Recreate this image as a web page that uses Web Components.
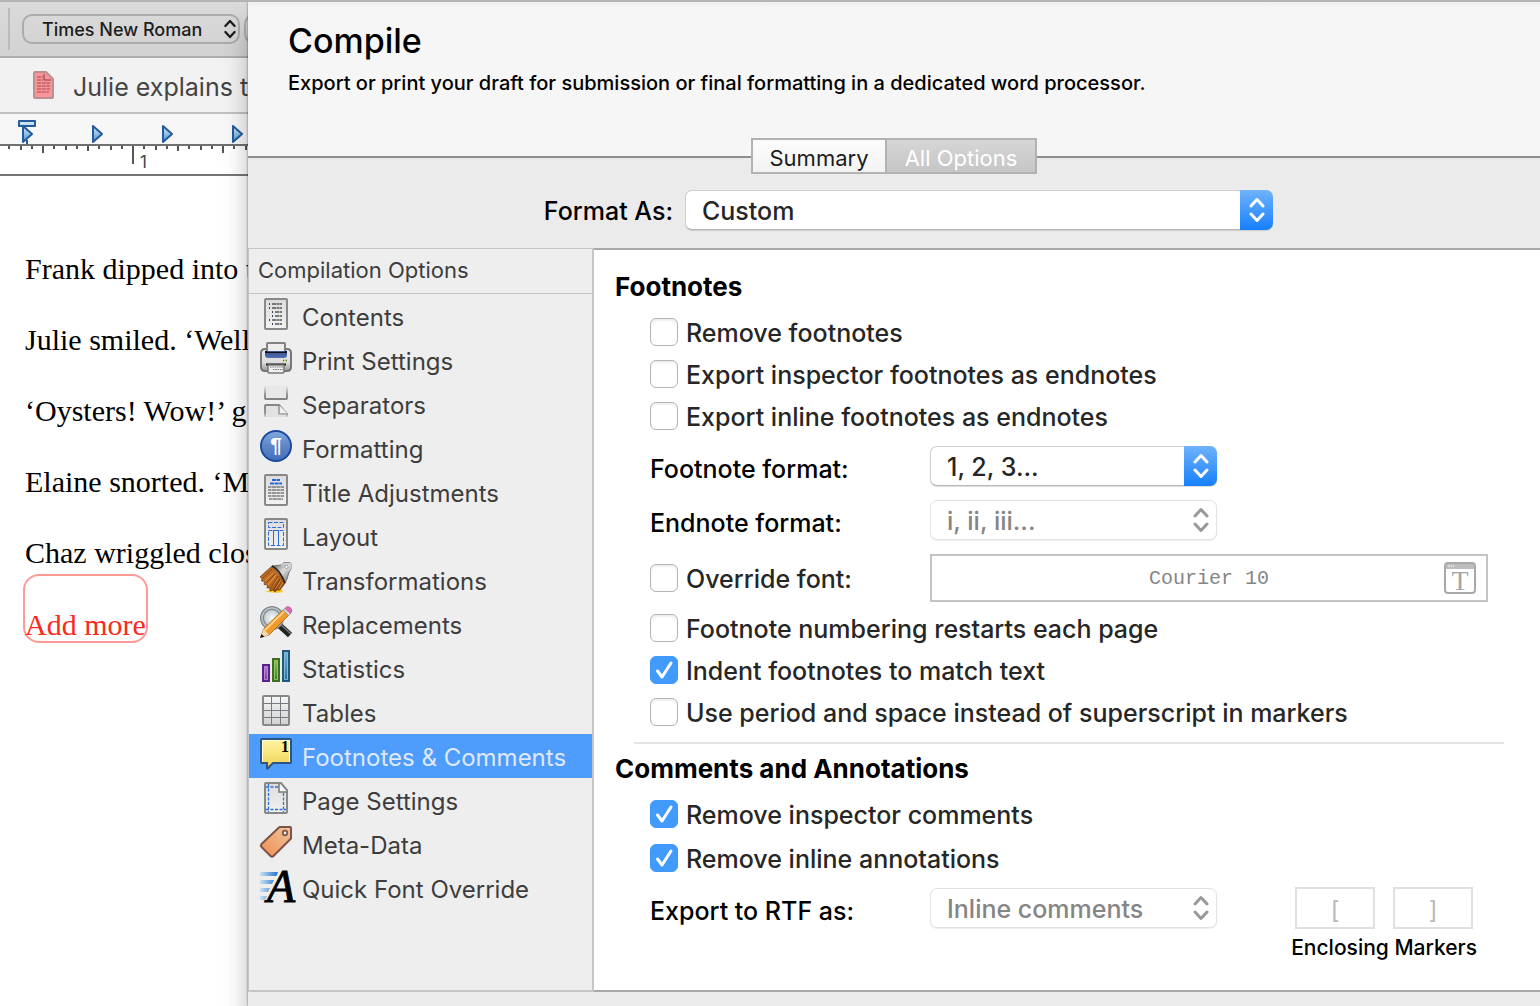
<!DOCTYPE html>
<html lang="en">
<head>
<meta charset="utf-8">
<title>Compile</title>
<style>
html, body{
    height: 100%;
}
body{
    margin: 0;
    display: grid;
    grid-template-columns: 248px minmax(0, 1fr);
    border-top: 2px solid #b4b4b4;
    box-sizing: border-box;
    overflow: hidden;
    background-color: #fff;
    font-family: Inter, "Liberation Sans", sans-serif;
    font-size: 25px;
    color: #000;
}
</style>
</head>
<body>
<editor-window></editor-window>
<compile-dialog></compile-dialog>

<script>
const chevrons = `
<svg class="chevrons" width="16" height="26" viewBox="0 0 16 26" fill="none" stroke="currentColor" stroke-width="3" stroke-linecap="round" stroke-linejoin="round" aria-hidden="true">
    <path d="M2 9 8 2.500 14 9M2 17l6 6.500 6-6.500"/>
</svg>`

// gradients shared by the page shaped icons
const pageDefs = `
<defs>
    <linearGradient id="paper" x1="0" y1="0" x2="0" y2="1">
        <stop offset="0" stop-color="#dcdcdc"/><stop offset="1" stop-color="#f2f2f2"/>
    </linearGradient>
</defs>`
const sheet = `${pageDefs}<rect x="5" y="1" width="22" height="30" rx="1" fill="url(#paper)" stroke="#888" stroke-width="2"/>`

const icons = {
    contents: `${sheet}
        <g stroke="#2c4460" stroke-width="2"><path d="M9 6h1M9 10h1M12 14h1M12 18h1M9 22h1M12 26h1"/></g>
        <g stroke="#555" stroke-width="1.3" stroke-dasharray="4 .5 3 .4"><path d="M12 6h10M12 10h10M15 14h7M15 18h7M12 22h10M15 26h7"/></g>`,
    print: `
        <defs>
            <linearGradient id="body" x1="0" y1="0" x2="0" y2="1"><stop offset="0" stop-color="#e8e8e8"/><stop offset=".6" stop-color="#dedede"/><stop offset="1" stop-color="#999"/></linearGradient>
            <linearGradient id="slot" x1="0" y1="0" x2="0" y2="1"><stop offset="0" stop-color="#3a4f88"/><stop offset="1" stop-color="#5070b4"/></linearGradient>
        </defs>
        <path d="M5 7h22q4 0 4 4v14q0 4-4 4H5q-4 0-4-4V11q0-4 4-4z" fill="url(#body)" stroke="#777" stroke-width="2"/>
        <path d="M7 10V2q0-1 1-1h16q1 0 1 1v8z" fill="#ededed" stroke="#828282" stroke-width="2"/>
        <path d="M5 9h22v4q0 3-3 3H8q-3 0-3-3z" fill="url(#slot)"/>
        <path d="M5 9h2v1h18V9h2v2H5z" fill="#0d1120"/>
        <path d="M23 18.500h1.300" stroke="#e22" stroke-width="1.500"/><path d="M24.300 18.500h1.300" stroke="#fc3" stroke-width="1.500"/><path d="M25.600 18.500h1.400" stroke="#3a3" stroke-width="1.500"/>
        <path d="M6 22.500h20" stroke="#111" stroke-width="2"/>
        <path d="M8 23h16v7q0 1-1 1H9q-1 0-1-1z" fill="#f1f1f1" stroke="#777" stroke-width="1.500"/>
        <path d="M10 25h13M13 27.500h10" stroke="#777" stroke-width="1" stroke-dasharray="1.500 .8"/>`,
    separators: `
        <defs>
            <linearGradient id="up" x1="0" y1="0" x2="0" y2="16" gradientUnits="userSpaceOnUse"><stop offset="0" stop-color="#999" stop-opacity="0"/><stop offset=".5" stop-color="#999"/><stop offset="1" stop-color="#777"/></linearGradient>
            <linearGradient id="down" x1="0" y1="17" x2="0" y2="32" gradientUnits="userSpaceOnUse"><stop offset="0" stop-color="#808080"/><stop offset=".7" stop-color="#999"/><stop offset="1" stop-color="#999" stop-opacity="0"/></linearGradient>
        </defs>
        <path d="M5 0v12q0 1 1 1h20q1 0 1-1V0" fill="#e8e8e8" stroke="url(#up)" stroke-width="2"/>
        <path d="M5 31V20q0-1 1-1h13l8 9v3" fill="#e2e2e2" stroke="url(#down)" stroke-width="2"/>
        <path d="M19 19v9h9" fill="#f0f0f0" stroke="url(#down)" stroke-width="1.500"/>`,
    formatting: `
        <defs><linearGradient id="blue" x1="0" y1="0" x2="0" y2="1"><stop offset="0" stop-color="#83aade"/><stop offset=".5" stop-color="#5e85c6"/><stop offset="1" stop-color="#426fba"/></linearGradient></defs>
        <circle cx="16" cy="16" r="15" fill="url(#blue)" stroke="#1c4a9e" stroke-width="2"/>
        <text x="16" y="22" text-anchor="middle" font-family="Liberation Sans" font-weight="700" font-size="21" fill="#fff">¶</text>`,
    title: `${sheet}
        <path d="M12 6h8M10 9.500h12" stroke="#2166d8" stroke-width="2" stroke-dasharray="4 .6"/>
        <path d="M8 13h16M8 16h16M8 19h16M8 22h16M9 25h14" stroke="#444" stroke-width="1.200" stroke-dasharray="3 .5 5 .4"/>`,
    layout: `${sheet}
        <g fill="none" stroke="#2f6dd6"><path d="M8.500 4.500h15v5h-15zM8.500 12.500h15v15h-15z" stroke-dasharray="4 1.500"/><path d="M13.500 12v16M18.500 12v16"/></g>`,
    transform: `
        <defs>
            <linearGradient id="metal" x1="0" y1="0" x2="1" y2="1"><stop offset="0" stop-color="#555"/><stop offset=".5" stop-color="#ddd"/><stop offset="1" stop-color="#666"/></linearGradient>
            <linearGradient id="hair" x1="0" y1="0" x2="1" y2="1"><stop offset="0" stop-color="#b4661c"/><stop offset=".5" stop-color="#c07026"/><stop offset="1" stop-color="#6a3008"/></linearGradient>
        </defs>
        <path d="M3 29q6 1 8-3l12 2q-2 2 1 2-10 2-21-1z" fill="#f9c518"/>
        <path d="M12 4 2 13 0 15l2 1-.5 3 3 .5-.5 3 3.500.500L7 26l3 0 0 3 3-1 2 2 2-2 3 0 6-8z" fill="url(#hair)" stroke="#5b2a08" stroke-width=".6"/>
        <path d="M11 8 4 15M13 11l-8 8M16 13l-8 10M18 16l-7 10M21 18l-6 9M23 20l-4 7" stroke="#e69a3c" stroke-width="1"/>
        <path d="M12 7 3 16M15 12l-9 9M18 14l-7 12M20 17l-6 11" stroke="#5b1e05" stroke-width=".6"/>
        <path d="M12 4q8 4 13 17l2-4 2-7 2-3V2q0-1.500-1.500-1.500H24L21 3z" fill="url(#metal)" stroke="#777" stroke-width="1"/>
        <path d="M21 3.500 24 1.500h5.500q1 0 1 1V6L28 9" stroke="#d2d2d2" stroke-width="1.500"/>
        <path d="M12 4q8 4 13 17" stroke="#222" stroke-width="1.500"/>
        <circle cx="26.500" cy="5" r="1.500" fill="#fff" stroke="#888" stroke-width=".7"/>`,
    replace: `
        <defs><radialGradient id="lens"><stop offset="0" stop-color="#f7fafb"/><stop offset="1" stop-color="#b7c3ca"/></radialGradient></defs>
        <path d="m19 19 11 10" stroke="#222" stroke-width="6"/>
        <path d="m20 18 11 10" stroke="#777" stroke-width="1.500"/>
        <circle cx="12" cy="12" r="10" fill="url(#lens)" stroke="#7f878b" stroke-width="4"/>
        <circle cx="12" cy="12" r="10" stroke="#b9c2c6" stroke-width="1.500"/>
        <path d="m1 31 2.500-8L23 4l5.500 5.500L9 29z" fill="#f09a2e" stroke="#a85f14" stroke-width=".8"/>
        <path d="M5 24 24 5.500" stroke="#ffd07c" stroke-width="2"/>
        <path d="m1 31 2.500-8L9 29z" fill="#f3dcb4"/><path d="m0 32 1.500-4 2.800 2.700z" fill="#111"/>
        <path d="m23 4 2-1.800 5.500 5.500-2 1.800z" fill="#d8d8d8" stroke="#888" stroke-width=".7"/>
        <path d="m25 2.200 1-1q2-1.500 4.300.4 2.600 2.400 1 5l-.8 1z" fill="#d96bb9" stroke="#b74a96" stroke-width=".6"/>`,
    stats: `
        <defs>
            <linearGradient id="p" x2="0" y2="1"><stop offset="0" stop-color="#bd7ad4"/><stop offset="1" stop-color="#7e36a4"/></linearGradient>
            <linearGradient id="g" x2="0" y2="1"><stop offset="0" stop-color="#8cc152"/><stop offset="1" stop-color="#3d8224"/></linearGradient>
            <linearGradient id="b" x2="0" y2="1"><stop offset="0" stop-color="#72b6cf"/><stop offset="1" stop-color="#2e6ea6"/></linearGradient>
        </defs>
        <path d="M2 14h8v18H2z" fill="#57228a"/><path d="M4.500 16.500h3v13h-3z" fill="url(#p)" stroke="#b988d2"/>
        <path d="M12 8h8v24h-8z" fill="#3c701e"/><path d="M14.500 10.500h3v19h-3z" fill="url(#g)" stroke="#93c46c"/>
        <path d="M22 0h8v32h-8z" fill="#20597e"/><path d="M24.500 2.500h3v27h-3z" fill="url(#b)" stroke="#82bbd9"/>`,
    tables: `
        <defs><linearGradient id="cell" x2="0" y2="1"><stop offset="0" stop-color="#f5f5f5"/><stop offset="1" stop-color="#d2d2d2"/></linearGradient></defs>
        <rect x="3" y="2" width="26" height="29" rx="1" fill="url(#cell)" stroke="#888" stroke-width="2"/>
        <path d="M11.500 2v29M20.500 2v29M3 9.500h26M3 16.500h26M3 23.500h26" stroke="#747b85"/>`,
    comments: `
        <defs><linearGradient id="note" x2="0" y2="1"><stop offset="0" stop-color="#fff4a4"/><stop offset=".5" stop-color="#f7e67b"/><stop offset="1" stop-color="#f0cc52"/></linearGradient></defs>
        <path d="M2 1h28q1 0 1 1v22q0 1-1 1H13l-5.500 5.500Q7 31 7 30v-5H2q-1 0-1-1V2q0-1 1-1z" fill="url(#note)" stroke="#2b5583" stroke-width="2"/>
        <path d="M2.500 24V2.500h27V24" stroke="#fffbd2"/>
        <text x="25" y="14" text-anchor="middle" font-family="Liberation Serif" font-weight="700" font-size="16" fill="#000">1</text>`,
    page: `${pageDefs}
        <path d="M6 1h15l6 7v22q0 1-1 1H6q-1 0-1-1V2q0-1 1-1z" fill="url(#paper)" stroke="#888" stroke-width="2"/>
        <path d="M8.500 2v28M23.500 11v19M6 5h13M6 27.500h20" stroke="#2f6dd6" stroke-width="1.300" stroke-dasharray="3 1.500"/>
        <path d="M19 1v9h8" fill="#fafafa" stroke="#777" stroke-width="1.500"/>`,
    tag: `
        <defs><linearGradient id="tag" x1="1" y1="0" x2="0" y2="1"><stop offset="0" stop-color="#efc4a0"/><stop offset="1" stop-color="#f08e4e"/></linearGradient></defs>
        <path d="M19.500 1H30q1 0 1 1v10.500L13.500 30q-1.500 1.500-3 0L1.500 21q-1.200-1.500 0-3z" fill="url(#tag)" stroke="#7d5348" stroke-width="2" stroke-linejoin="round"/>
        <circle cx="25" cy="7" r="2.300" fill="#f3ece7" stroke="#7d5348" stroke-width="1.700"/>`,
    font: `
        <defs><linearGradient id="speed"><stop offset="0" stop-color="#c8e1f4"/><stop offset="1" stop-color="#2372ce"/></linearGradient></defs>
        <path d="M0 2h18l-1.500 4H0zM0 10h14l-2 4H0zM0 18h10l-2 4H0zM0 26h7l-2 4H0z" fill="url(#speed)"/>
        <text x="7" y="32" font-family="Liberation Serif" font-style="italic" font-size="46" fill="#000" stroke="#000">A</text>`
}

class FontPicker extends HTMLElement{
    constructor(){
        super()
        this._shadowDom = this.attachShadow({mode: 'open'})
    }
    connectedCallback(){
        this._shadowDom.innerHTML = `
        <style>
        :host{
            display: grid;
            grid-template-columns: 218px;
            align-items: center;
            color: #1d1d1d;
        }
        select, .chevrons{
            grid-area: 1 / 1;
        }
        select{
            appearance: none;
            height: 30px;
            padding: 0 18px;
            border: 2px solid #ababab;
            border-radius: 10px;
            background-color: transparent;
            font: 500 18px Inter, sans-serif;
            color: inherit;
        }
        .chevrons{
            justify-self: end;
            width: 14px;
            height: 20px;
            margin-right: 3px;
            pointer-events: none;
        }
        </style>
        <select aria-label="Font family"><option>Times New Roman</option></select>
        ${chevrons}
        `
    }
}

class TabRuler extends HTMLElement{
    constructor(){
        super()
        this._shadowDom = this.attachShadow({mode: 'open'})
    }
    connectedCallback(){
        let ticks = ''
        // sixteenths of an inch, 180px to the inch
        for(let i = -11; i <= 10; i++){
            const x = Math.round(133 + i * 11.25)
            let h = 3
            if(i % 2 === 0) h = 4
            if(i % 4 === 0) h = 5
            if(i % 8 === 0) h = 7
            if(i % 16 === 0) h = 18
            ticks += `<path d="M${x} 32v${h}"/>`
        }
        const stops = [22, 92, 162, 232].map(x => `<path d="M${x + 1} 12v16l9-8z"/>`).join('')
        this._shadowDom.innerHTML = `
        <style>
        :host{
            display: grid;
            height: 60px;
            border-bottom: 2px solid #767676;
            background: linear-gradient(#f7f7f7 30px, #707070 30px, #707070 32px, #fff 32px);
        }
        svg, span{
            grid-area: 1 / 1;
        }
        span{
            padding: 37px 0 0 140px;
            font-size: 17px;
            line-height: 22px;
            color: #444;
        }
        </style>
        <svg width="248" height="60" viewBox="0 0 248 60" aria-hidden="true">
            <defs><linearGradient id="stop" x2="0" y2="1"><stop offset="0" stop-color="#d5e8f7"/><stop offset="1" stop-color="#4f95d6"/></linearGradient></defs>
            <g stroke="#555" stroke-width="2">${ticks}</g>
            <g fill="url(#stop)" stroke="#245b9b" stroke-width="2" stroke-linejoin="round">
                <path d="M19 7h16v5H19zM27 26v4"/>
                ${stops}
            </g>
        </svg>
        <span>1</span>
        `
    }
}

class EditorWindow extends HTMLElement{
    constructor(){
        super()
        this._shadowDom = this.attachShadow({mode: 'open'})
    }
    connectedCallback(){
        this._shadowDom.innerHTML = `
        <style>
        :host{
            display: flex;
            flex-direction: column;
            min-width: 0;
            overflow: hidden;
            white-space: nowrap;
            background-color: #fff;
        }
        .toolbar{
            display: flex;
            align-items: center;
            height: 54px;
            padding-left: 8px;
            border-bottom: 2px solid #aeaeae;
            background: linear-gradient(#dadadb, #d2d2d3);
        }
        .divider{
            flex: none;
            width: 2px;
            height: 42px;
            margin-right: 12px;
            background-color: #bbb;
        }
        .next{
            flex: none;
            width: 60px;
            height: 26px;
            margin-left: 4px;
            border: 2px solid #ababab;
            border-radius: 10px;
        }
        .document{
            display: flex;
            align-items: center;
            gap: 18px;
            height: 54px;
            padding-left: 33px;
            border-bottom: 2px solid #bdc1c4;
            background-color: #f2f2f2;
            color: #444;
        }
        .document svg{
            flex: none;
        }
        .document span{
            padding-top: 3px;
        }
        .draft{
            padding: 57px 0 0 25px;
            font-family: "Liberation Serif", serif;
            font-size: 30px;
            line-height: 71px;
        }
        p{
            margin: 0;
        }
        .annotation{
            width: fit-content;
            margin: -14px 0 0 -2px;
            padding: 33px 0 0;
            border: 2px solid #ff9a96;
            border-radius: 16px;
            line-height: 32px;
            color: #fc2a1c;
        }
        </style>
        <div class="toolbar">
            <div class="divider"></div>
            <font-picker></font-picker>
            <div class="next"></div>
        </div>
        <div class="document">
            <svg width="22" height="28" viewBox="0 0 22 28" fill="none" aria-hidden="true">
                <path d="M2 1h11l7 7v18q0 1-1 1H2q-1 0-1-1V2q0-1 1-1z" fill="#f7959a" stroke="#bd8f90" stroke-width="2"/>
                <path d="M11 3v6h7" stroke="#8a3c40"/>
                <path d="M4 6h6M4 9h6M4 12h13M4 15h13M4 18h13M4 21h12" stroke="#a8484e" stroke-dasharray="4 .7"/>
            </svg>
            <span>Julie explains t</span>
        </div>
        <tab-ruler></tab-ruler>
        <div class="draft">
            <p>Frank dipped into t</p>
            <p>Julie smiled. ‘Well</p>
            <p>‘Oysters! Wow!’ g</p>
            <p>Elaine snorted. ‘M</p>
            <p>Chaz wriggled clos</p>
            <p class="annotation">Add more</p>
        </div>
        `
    }
}

class OptionItem extends HTMLElement{
    constructor(){
        super()
        this._shadowDom = this.attachShadow({mode: 'open'})
    }
    connectedCallback(){
        this._shadowDom.innerHTML = `
        <style>
        :host{
            display: block;
        }
        a{
            display: flex;
            align-items: center;
            gap: 10px;
            height: 44px;
            padding-left: 11px;
            color: #3d3d3d;
            text-decoration: none;
            white-space: nowrap;
        }
        :host([selected]) a{
            background-color: #4e9cfb;
            color: #dfe8fc;
        }
        svg{
            flex: none;
            margin-bottom: 4px;
            overflow: visible;
        }
        span{
            padding-top: 3px;
        }
        </style>
        <a href="#${this.getAttribute('icon')}">
            <svg width="32" height="32" viewBox="0 0 32 32" fill="none" aria-hidden="true">${icons[this.getAttribute('icon')]}</svg>
            <span><slot></slot></span>
        </a>
        `
    }
}

class OptionList extends HTMLElement{
    constructor(){
        super()
        this._shadowDom = this.attachShadow({mode: 'open'})
    }
    connectedCallback(){
        this._shadowDom.innerHTML = `
        <style>
        :host{
            display: block;
            border: solid #c5c5c5;
            border-width: 1px 2px 2px 1px;
            background-color: #eee;
            font-size: 24px;
        }
        h2{
            margin: 0;
            padding: 0 0 2px 9px;
            border-bottom: 1px solid #c5c5c5;
            font-size: 22px;
            font-weight: 400;
            line-height: 42px;
            color: #3d3d3d;
        }
        </style>
        <h2>Compilation Options</h2>
        <nav>
            <option-item icon="contents">Contents</option-item>
            <option-item icon="print">Print Settings</option-item>
            <option-item icon="separators">Separators</option-item>
            <option-item icon="formatting">Formatting</option-item>
            <option-item icon="title">Title Adjustments</option-item>
            <option-item icon="layout">Layout</option-item>
            <option-item icon="transform">Transformations</option-item>
            <option-item icon="replace">Replacements</option-item>
            <option-item icon="stats">Statistics</option-item>
            <option-item icon="tables">Tables</option-item>
            <option-item icon="comments" selected>Footnotes &amp; Comments</option-item>
            <option-item icon="page">Page Settings</option-item>
            <option-item icon="tag">Meta-Data</option-item>
            <option-item icon="font">Quick Font Override</option-item>
        </nav>
        `
    }
}

class CheckOption extends HTMLElement{
    constructor(){
        super()
        this._shadowDom = this.attachShadow({mode: 'open'})
    }
    connectedCallback(){
        this._shadowDom.innerHTML = `
        <style>
        :host{
            display: block;
            color: #262626;
        }
        label{
            display: grid;
            grid-template-columns: 28px 1fr;
            column-gap: 8px;
            align-items: center;
            height: 42px;
            white-space: nowrap;
        }
        input, svg{
            grid-area: 1 / 1;
        }
        input{
            appearance: none;
            box-sizing: border-box;
            width: 28px;
            height: 28px;
            margin: 0;
            border: 1px solid #b4b4b4;
            border-radius: 6px;
            background-color: #fff;
            box-shadow: inset 0 2px 2px #eee;
        }
        input:checked{
            border-color: #3f99f8;
            background-color: #409bfc;
            box-shadow: none;
        }
        svg{
            display: none;
            pointer-events: none;
        }
        input:checked + svg{
            display: block;
        }
        span{
            padding-top: 2px;
        }
        </style>
        <label>
            <input type="checkbox" ${this.hasAttribute('checked') ? 'checked' : ''}>
            <svg width="28" height="28" viewBox="0 0 28 28" fill="none" stroke="#fff" stroke-width="3" stroke-linecap="round" stroke-linejoin="round" aria-hidden="true"><path d="m7.500 15 4.500 6 9-14"/></svg>
            <span><slot></slot></span>
        </label>
        `
    }
}

class PopUp extends HTMLElement{
    constructor(){
        super()
        this._shadowDom = this.attachShadow({mode: 'open'})
    }
    connectedCallback(){
        const disabled = this.hasAttribute('disabled') ? 'disabled' : ''
        this._shadowDom.innerHTML = `
        <style>
        :host{
            display: grid;
            grid-template-columns: var(--label-width, 280px) minmax(0, var(--control-width, 287px));
            align-items: center;
            height: 54px;
        }
        label{
            padding: var(--label-padding, 5px 0 0);
            text-align: var(--label-align, left);
            white-space: nowrap;
        }
        .control{
            display: grid;
            align-items: center;
        }
        select, .cap{
            grid-area: 1 / 1;
        }
        select{
            appearance: none;
            box-sizing: border-box;
            width: 100%;
            height: 40px;
            padding: 1px 16px 0;
            border: 1px solid #cfcfcf;
            border-bottom-color: #b5b5b5;
            border-radius: 7px;
            background-color: #fff;
            box-shadow: 0 1px 1px #0002;
            font: inherit;
            color: #262626;
            opacity: 1;
        }
        .cap{
            justify-self: end;
            display: grid;
            place-items: center;
            width: 33px;
            height: 40px;
            border-radius: 0 7px 7px 0;
            background: linear-gradient(#6fb3fb, #1780fd);
            color: #fff;
            pointer-events: none;
        }
        select:disabled{
            border-color: #e2e2e2;
            box-shadow: 0 1px 1px #0001;
            color: #858585;
        }
        select:disabled + .cap{
            background: none;
            color: #999;
        }
        </style>
        <label for="choice">${this.getAttribute('label')}</label>
        <div class="control">
            <select id="choice" ${disabled}><option>${this.getAttribute('value')}</option></select>
            <div class="cap">${chevrons}</div>
        </div>
        `
    }
}

class FontWell extends HTMLElement{
    constructor(){
        super()
        this._shadowDom = this.attachShadow({mode: 'open'})
    }
    connectedCallback(){
        this._shadowDom.innerHTML = `
        <style>
        :host{
            display: grid;
            grid-template-columns: 1fr 42px;
            align-items: center;
            box-sizing: border-box;
            height: 48px;
            border: 2px solid #c3c3c3;
        }
        span{
            grid-area: 1 / 1 / 2 / 3;
            text-align: center;
            font-family: "Liberation Mono", monospace;
            font-size: 20px;
            font-weight: 400;
            color: #858585;
        }
        button{
            grid-area: 1 / 2;
            padding: 0;
            border: none;
            background: none;
            text-align: left;
        }
        svg{
            display: block;
        }
        </style>
        <span>Courier 10</span>
        <button disabled aria-label="Choose font">
            <svg width="32" height="32" viewBox="0 0 32 32" fill="none" aria-hidden="true">
                <rect x="1" y="1" width="30" height="30" rx="3" fill="#fff" stroke="#a9a9a9" stroke-width="2"/>
                <path d="M2 2h28v5H2z" fill="#bdbdbd"/>
                <path d="M4 4h6" stroke="#eee" stroke-width="1.500" stroke-dasharray="1.500 1"/>
                <text x="16" y="28" text-anchor="middle" font-family="Liberation Serif" font-weight="400" font-size="28" fill="#a6a6a6">T</text>
            </svg>
        </button>
        `
    }
}

class EnclosingMarkers extends HTMLElement{
    constructor(){
        super()
        this._shadowDom = this.attachShadow({mode: 'open'})
    }
    connectedCallback(){
        this._shadowDom.innerHTML = `
        <style>
        :host{
            display: block;
            font-size: 21px;
        }
        div{
            display: flex;
            gap: 18px;
            justify-content: center;
        }
        input{
            box-sizing: border-box;
            width: 80px;
            height: 42px;
            padding: 4px 0 0;
            border: 2px solid #e0e0e0;
            border-radius: 0;
            background-color: #fff;
            font: 24px Inter, sans-serif;
            text-align: center;
            color: #b9b9b9;
        }
        label{
            display: block;
            margin-top: 5px;
            line-height: 28px;
            text-align: center;
            white-space: nowrap;
        }
        </style>
        <div>
            <input id="open" value="[" disabled>
            <input value="]" aria-label="Closing marker" disabled>
        </div>
        <label for="open">Enclosing Markers</label>
        `
    }
}

class FootnotesPanel extends HTMLElement{
    constructor(){
        super()
        this._shadowDom = this.attachShadow({mode: 'open'})
    }
    connectedCallback(){
        this._shadowDom.innerHTML = `
        <style>
        :host{
            display: block;
            min-width: 0;
            padding: 16px 36px 0 21px;
            border: solid #a9a9a9;
            border-width: 2px 0;
            background-color: #fff;
            font-weight: 500;
        }
        h3{
            margin: 0 0 3px;
            font-size: 26px;
            font-weight: 700;
            line-height: 42px;
        }
        section{
            padding-left: 35px;
        }
        .formats{
            padding: 2px 0;
        }
        .override{
            display: grid;
            grid-template-columns: 280px minmax(0, 558px);
            align-items: center;
            height: 54px;
            margin-top: 4px;
        }
        hr{
            height: 2px;
            margin: 9px 0 4px 19px;
            border: none;
            background-color: #e4e4e4;
        }
        .comments{
            display: grid;
            row-gap: 2px;
        }
        .export{
            display: flex;
            justify-content: space-between;
            padding-right: 27px;
        }
        enclosing-markers{
            margin-top: 6px;
        }
        </style>
        <h3>Footnotes</h3>
        <section>
            <check-option>Remove footnotes</check-option>
            <check-option>Export inspector footnotes as endnotes</check-option>
            <check-option>Export inline footnotes as endnotes</check-option>
            <div class="formats">
                <pop-up label="Footnote format:" value="1, 2, 3..."></pop-up>
                <pop-up label="Endnote format:" value="i, ii, iii..." disabled></pop-up>
                <div class="override">
                    <check-option>Override font:</check-option>
                    <font-well></font-well>
                </div>
            </div>
            <check-option>Footnote numbering restarts each page</check-option>
            <check-option checked>Indent footnotes to match text</check-option>
            <check-option>Use period and space instead of superscript in markers</check-option>
        </section>
        <hr>
        <h3>Comments and Annotations</h3>
        <section class="comments">
            <check-option checked>Remove inspector comments</check-option>
            <check-option checked>Remove inline annotations</check-option>
            <div class="export">
                <pop-up label="Export to RTF as:" value="Inline comments" disabled></pop-up>
                <enclosing-markers></enclosing-markers>
            </div>
        </section>
        `
    }
}

class ViewTabs extends HTMLElement{
    constructor(){
        super()
        this._shadowDom = this.attachShadow({mode: 'open'})
    }
    connectedCallback(){
        this._shadowDom.innerHTML = `
        <style>
        :host{
            display: grid;
            grid-template-columns: 1fr 134px 152px 1fr;
            align-items: center;
            background: linear-gradient(#f6f6f6 50%, #ebebeb 50%);
        }
        :host::before, :host::after{
            content: "";
            height: 2px;
            margin-top: 2px;
            background-color: #8e8e8e;
        }
        button{
            box-sizing: border-box;
            height: 36px;
            padding: 4px 0 0;
            border: 2px solid #b2b2b2;
            border-right-width: 0;
            background: linear-gradient(#fcfcfc, #f3f3f3);
            font: 22px Inter, sans-serif;
            color: #1c1c1c;
        }
        button[aria-pressed="true"]{
            border-right-width: 2px;
            background: linear-gradient(#d6d6d6, #c6c6c6);
            color: #fff;
        }
        </style>
        <button aria-pressed="false">Summary</button>
        <button aria-pressed="true">All Options</button>
        `
    }
}

class CompileDialog extends HTMLElement{
    constructor(){
        super()
        this._shadowDom = this.attachShadow({mode: 'open'})
    }
    connectedCallback(){
        this._shadowDom.innerHTML = `
        <style>
        :host{
            display: flex;
            flex-direction: column;
            z-index: 1;
            min-width: 0;
            background-color: #ebebeb;
            box-shadow: 0 24px 24px #0004, 0 0 2px #0008;
        }
        header{
            box-sizing: border-box;
            height: 136px;
            padding: 15px 40px 0;
            background: linear-gradient(#efefef, #f6f6f6 8px);
        }
        h1{
            margin: 0;
            font-size: 34px;
            font-weight: 500;
            line-height: 48px;
        }
        p{
            margin: 4px 0 0;
            font-size: 20px;
            font-weight: 500;
            line-height: 28px;
        }
        pop-up{
            --label-width: 437px;
            --control-width: 588px;
            --label-align: right;
            --label-padding: 2px 12px 0 0;
            height: 72px;
            margin-bottom: 2px;
            font-weight: 500;
        }
        main{
            flex: 1;
            display: grid;
            grid-template-columns: 346px minmax(0, 1fr);
            margin-bottom: 14px;
        }
        </style>
        <header>
            <h1>Compile</h1>
            <p>Export or print your draft for submission or final formatting in a dedicated word processor.</p>
        </header>
        <view-tabs></view-tabs>
        <pop-up label="Format As:" value="Custom"></pop-up>
        <main>
            <option-list></option-list>
            <footnotes-panel></footnotes-panel>
        </main>
        `
    }
}

window.customElements.define('font-picker', FontPicker)
window.customElements.define('tab-ruler', TabRuler)
window.customElements.define('editor-window', EditorWindow)
window.customElements.define('option-item', OptionItem)
window.customElements.define('option-list', OptionList)
window.customElements.define('check-option', CheckOption)
window.customElements.define('pop-up', PopUp)
window.customElements.define('font-well', FontWell)
window.customElements.define('enclosing-markers', EnclosingMarkers)
window.customElements.define('footnotes-panel', FootnotesPanel)
window.customElements.define('view-tabs', ViewTabs)
window.customElements.define('compile-dialog', CompileDialog)
</script>
</body>
</html>
